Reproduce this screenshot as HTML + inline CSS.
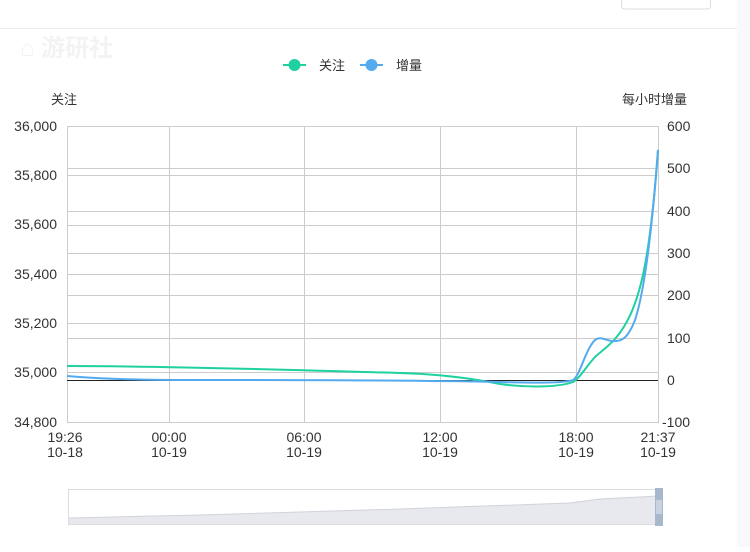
<!DOCTYPE html>
<html><head><meta charset="utf-8"><style>
body{margin:0;width:750px;height:547px;background:#fff;overflow:hidden;font-family:"Liberation Sans","Noto Sans CJK SC",sans-serif;}
</style></head><body>
<svg width="750" height="547" viewBox="0 0 750 547" xmlns="http://www.w3.org/2000/svg" font-family="Liberation Sans, Noto Sans CJK SC, sans-serif">
<rect x="737" y="0" width="13" height="547" fill="#f9f9fb"/>
<line x1="0" y1="28.5" x2="737" y2="28.5" stroke="#ececf0"/>
<rect x="621.5" y="-6" width="89" height="15" rx="3" fill="#fff" stroke="#ddd"/>
<text x="20" y="56" font-size="24" fill="#f3f3f3" font-weight="bold">⌂ 游研社</text>
<!-- legend -->
<line x1="283" y1="65" x2="306" y2="65" stroke="#1fd1a0" stroke-width="2"/>
<circle cx="294.5" cy="65" r="6" fill="#1fd1a0"/>
<text x="319" y="70" font-size="13" fill="#333">关注</text>
<line x1="360" y1="65" x2="383" y2="65" stroke="#55aaee" stroke-width="2"/>
<circle cx="371.5" cy="65" r="6" fill="#55aaee"/>
<text x="396" y="70" font-size="13" fill="#333">增量</text>
<text x="51" y="104" font-size="13" fill="#333">关注</text>
<text x="622" y="104" font-size="13" fill="#333">每小时增量</text>
<g stroke="#ccc" stroke-width="1">
<line x1="67" y1="126.5" x2="658" y2="126.5"/><line x1="67" y1="175.5" x2="658" y2="175.5"/><line x1="67" y1="225.5" x2="658" y2="225.5"/><line x1="67" y1="274.5" x2="658" y2="274.5"/><line x1="67" y1="323.5" x2="658" y2="323.5"/><line x1="67" y1="372.5" x2="658" y2="372.5"/><line x1="67" y1="422.5" x2="658" y2="422.5"/>
<line x1="67" y1="168.5" x2="658" y2="168.5"/><line x1="67" y1="211.5" x2="658" y2="211.5"/><line x1="67" y1="253.5" x2="658" y2="253.5"/><line x1="67" y1="295.5" x2="658" y2="295.5"/><line x1="67" y1="338.5" x2="658" y2="338.5"/>
<line x1="67.5" y1="126" x2="67.5" y2="423"/><line x1="169.5" y1="126" x2="169.5" y2="423"/><line x1="304.5" y1="126" x2="304.5" y2="423"/><line x1="440.5" y1="126" x2="440.5" y2="423"/><line x1="576.5" y1="126" x2="576.5" y2="423"/><line x1="658.5" y1="126" x2="658.5" y2="423"/>
</g>
<line x1="67" y1="380.5" x2="658" y2="380.5" stroke="#222" stroke-width="1"/>
<g font-size="14" fill="#333" text-anchor="end">
<text x="57" y="131">36,000</text><text x="57" y="180">35,800</text><text x="57" y="229">35,600</text><text x="57" y="279">35,400</text><text x="57" y="328">35,200</text><text x="57" y="377">35,000</text><text x="57" y="427">34,800</text>
</g>
<g font-size="14" fill="#333" text-anchor="start">
<text x="667" y="131">600</text><text x="667" y="173">500</text><text x="667" y="216">400</text><text x="667" y="258">300</text><text x="667" y="300">200</text><text x="667" y="343">100</text><text x="667" y="385">0</text><text x="662" y="427">-100</text>
</g>
<g font-size="14" fill="#333" text-anchor="middle">
<text x="65" y="442">19:26</text><text x="65" y="457">10-18</text>
<text x="169" y="442">00:00</text><text x="169" y="457">10-19</text>
<text x="304" y="442">06:00</text><text x="304" y="457">10-19</text>
<text x="440" y="442">12:00</text><text x="440" y="457">10-19</text>
<text x="576" y="442">18:00</text><text x="576" y="457">10-19</text>
<text x="658" y="442">21:37</text><text x="658" y="457">10-19</text>
</g>
<path d="M67 366 C150 366 300 370 400 373 C440 374 470 378 500 384 C530 388 560 387 573 382 C580 378 585 368 595 357 C605 348 615 342 625 325 C640 300 650 260 658 150" fill="none" stroke="#1fd1a0" stroke-width="2"/>
<path d="M67 376 C90 378 120 380 200 380 C350 380 450 381 500 382 C540 383 565 383 573 380 C580 376 585 350 595 340 C600 336 605 340 612 341 C622 342 628 338 635 320 C645 290 652 230 658 150" fill="none" stroke="#55aaee" stroke-width="2"/>
<!-- data zoom -->
<rect x="68.5" y="489.5" width="590" height="35" fill="#fff" stroke="#ddd"/>
<path d="M69 518 L200 515 L400 509 L570 503 L600 499 L658 496 L658 524 L69 524 Z" fill="#e8e9ee"/>
<path d="M69 518 L200 515 L400 509 L570 503 L600 499 L658 496" fill="none" stroke="#d0d3da"/>
<rect x="655" y="488" width="8" height="38" fill="#a7b7cc"/>
<rect x="656" y="500" width="6" height="14" fill="#c8d2e0"/>
</svg>
</body></html>
